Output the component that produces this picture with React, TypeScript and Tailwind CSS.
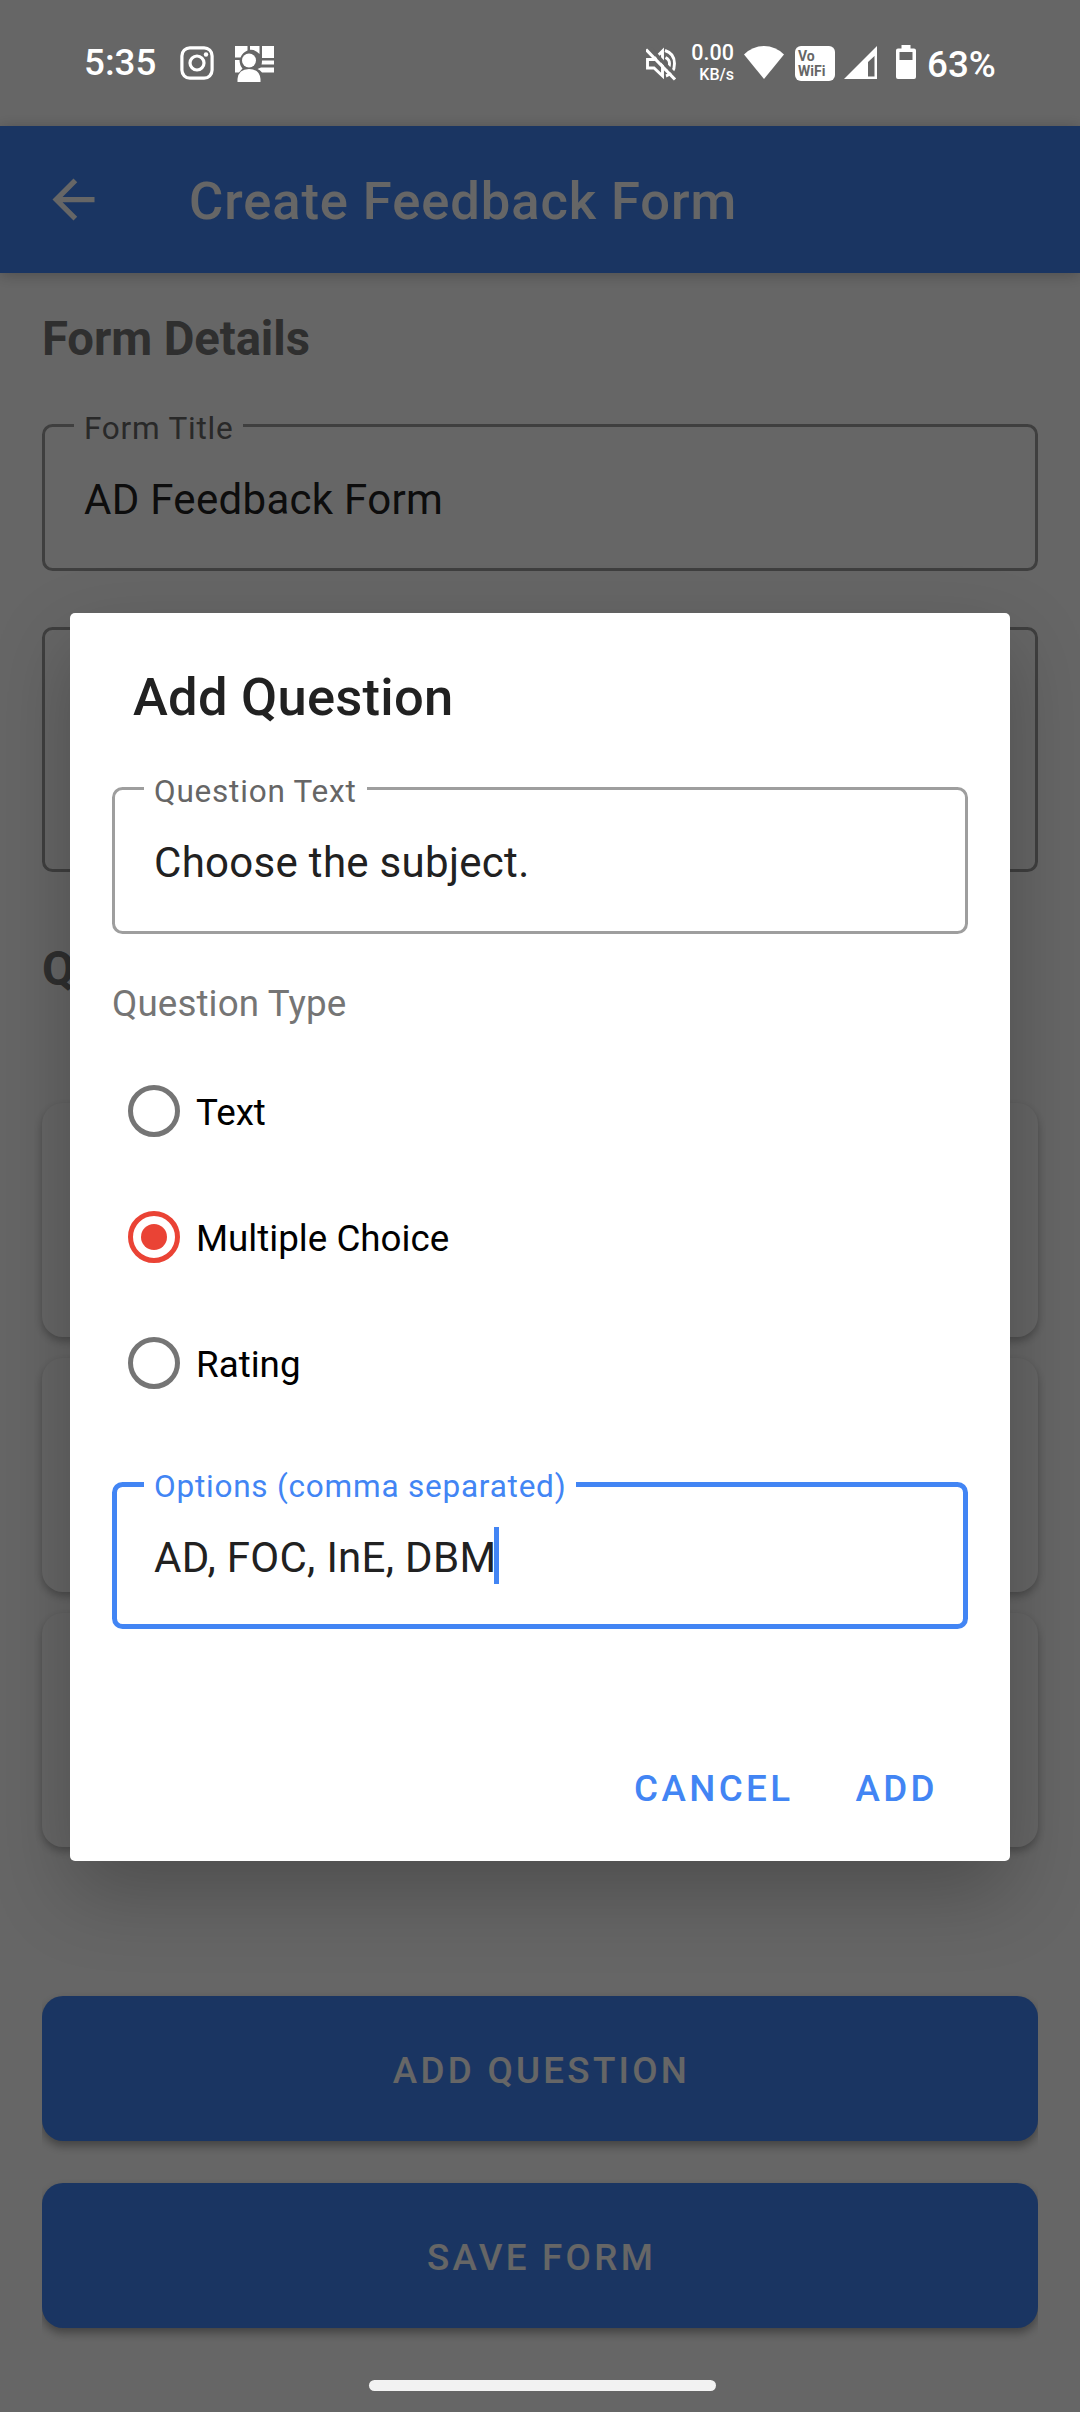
import React from "react";

function StatusBar() {
  return (
    <div className="absolute inset-x-0 top-0 z-20 flex h-[126px] items-start text-white">
      <span className="ml-[84px] mt-[41px] w-[96px] text-[36.75px] leading-[44px] font-medium">5:35</span>
      <svg className="mt-[46px]" width="34" height="34" viewBox="0 0 34 34" fill="none" stroke="white">
        <rect x="1.9" y="1.9" width="30.2" height="30.2" rx="8" strokeWidth="3.2" />
        <circle cx="17" cy="17" r="7" strokeWidth="3.2" />
        <circle cx="26" cy="8.5" r="2.2" fill="white" stroke="none" />
      </svg>
      <svg className="ml-[21px] mt-[45px]" width="39" height="37" viewBox="0 0 39 37" fill="white">
        <path d="M0 1h12.500v4.500Q7.500 7.500 5.500 12.500H0z M15 1h9.500v8Q20 4.300 15 4.800z M27 1h12v12h-12z M0 15h4.500q0 5 3 8.500L4 27.500H0z M27 15.500h12v4H26.500q.5-2 .5-4z M26 22.500h13v5H27Q24.800 24.800 22.500 24z" />
        <circle cx="14" cy="15.500" r="7" />
        <path d="M2.500 37V34Q3.500 24 14 24Q24.500 24 25.500 34V37z" />
      </svg>
      <svg className="ml-[372px] mt-[47px]" width="31" height="34" viewBox="0 0 31 34" fill="none" stroke="white" strokeWidth="2.900">
        <path d="M1.500 12.500h6.500l8.500-8.500v25l-8.500-8H1.500z" />
        <path d="M19 3.500q9.500 3 9.500 13t-8.500 12.500M19.500 10.500q4 2 4 6t-2.500 5" />
        <path d="M3 0l29 31" stroke="#666666" strokeWidth="3.500" />
        <path d="M0 2.500l29 30" strokeWidth="3.200" />
      </svg>
      <div className="ml-[12px] mt-[41px] flex w-[45px] flex-col items-end font-medium">
        <span className="text-[21.500px] leading-[24px]">0.00</span>
        <span className="text-[16px] leading-[19px]">KB/s</span>
      </div>
      <svg className="ml-[10px] mt-[46px]" width="40" height="33" viewBox="0 0 40 33" fill="white">
        <path d="M0 8.500Q8.500 0 20 0T40 8.500L20 33z" />
      </svg>
      <div className="ml-[11px] mt-[45.500px] flex h-[35.500px] w-[40px] flex-col rounded-[6px] bg-white pl-[3px] pt-[3px] text-[14px] font-bold leading-[15px] text-[#666666]">
        <span>Vo</span>
        <span>WiFi</span>
      </div>
      <svg className="ml-[9px] mt-[46px]" width="33" height="33" viewBox="0 0 33 33" fill="white">
        <path fillRule="evenodd" d="M33 0V33H0z M30.500 10L24 16V30.500h6.500z" />
      </svg>
      <svg className="ml-[19px] mt-[45px]" width="20" height="34" viewBox="0 0 20 34" fill="white">
        <path fillRule="evenodd" d="M5.500 0h9v3.500H18q2 0 2 2V32q0 2-2 2H2q-2 0-2-2V5.500q0-2 2-2h3.500z M3.500 7v8h13V7z" />
      </svg>
      <span className="ml-[11px] mt-[43px] text-[36.750px] font-medium leading-[44px]">63%</span>
    </div>
  );
}

type FieldProps = {
  label?: string;
  value?: string;
  focused?: boolean;
  className?: string;
};

function OutlinedField({ label, value, focused = false, className = "" }: FieldProps) {
  return (
    <div
      className={`relative rounded-[10.500px] ${
        focused ? "border-[5px] border-[#4285f4] pl-[37px] pt-[46px]" : "border-[3px] border-[#9e9e9e] pl-[39px] pt-[48px]"
      } ${className}`}
    >
      {label && (
        <span
          className={`absolute whitespace-nowrap bg-white px-[10px] text-[31.500px] leading-[32px] tracking-[0.780px] ${
            focused ? "left-[27px] top-[-16px] text-[#4285f4]" : "left-[29px] top-[-14px] text-[#666666]"
          }`}
        >
          {label}
        </span>
      )}
      {value && (
        <div className="flex items-start">
          <span className="whitespace-nowrap text-[42px] leading-[50px] tracking-[0.300px] text-[#212121]">{value}</span>
          {focused && <span className="-ml-[2px] -mt-[6px] h-[57px] w-[5px] bg-[#4285f4]" />}
        </div>
      )}
    </div>
  );
}

function RadioRow({ label, checked = false }: { label: string; checked?: boolean }) {
  return (
    <div className="flex h-[126px] items-center">
      <span
        className={`flex size-[52px] items-center justify-center rounded-full border-[5px] ${
          checked ? "border-[#ea4335]" : "border-[#757575]"
        }`}
      >
        {checked && <span className="size-[26px] rounded-full bg-[#ea4335]" />}
      </span>
      <span className="ml-[16px] mt-[3px] text-[36.750px] leading-[44px] text-black">{label}</span>
    </div>
  );
}

function PageButton({ children }: { children: React.ReactNode }) {
  return (
    <button className="h-[145px] w-full rounded-[21px] bg-[#4285f4] pl-[3px] pt-[5px] text-[36.750px] font-medium tracking-[3.280px] text-white shadow-[0_5px_10px_rgba(0,0,0,0.350)] [clip-path:inset(-20px_0)]">
      {children}
    </button>
  );
}

function QuestionCard() {
  return <div className="h-[234px] rounded-[21px] bg-white shadow-[0_4px_9px_rgba(0,0,0,0.280)]" />;
}

function Page() {
  return (
    <div className="flex h-full flex-col bg-white">
      <header className="mt-[126px] flex h-[147px] shrink-0 items-center bg-[#4285f4] pl-[42px] shadow-[0_2px_14px_rgba(0,0,0,0.240)]">
        <svg width="63" height="63" viewBox="0 0 24 24" fill="white">
          <path d="M20 11H7.830l5.590-5.590L12 4l-8 8 8 8 1.410-1.410L7.830 13H20v-2z" />
        </svg>
        <h1 className="ml-[84px] mt-[3px] text-[52.500px] font-medium leading-[62px] tracking-[0.920px] text-white">Create Feedback Form</h1>
      </header>
      <main className="flex flex-col px-[42px] pt-[38px]">
        <h2 className="text-[47.250px] font-bold leading-[56px] tracking-[-0.080px] text-[#757575]">Form Details</h2>
        <OutlinedField className="mt-[57px] h-[147px]" label="Form Title" value="AD Feedback Form" />
        <OutlinedField className="mt-[56px] h-[245px]" />
        <h2 className="mt-[69px] text-[47.250px] font-bold leading-[56px] text-[#757575]">Q</h2>
        <div className="mt-[106px] flex flex-col gap-[21px]">
          <QuestionCard />
          <QuestionCard />
          <QuestionCard />
        </div>
        <div className="mt-[149px] flex flex-col gap-[42px]">
          <PageButton>ADD QUESTION</PageButton>
          <PageButton>SAVE FORM</PageButton>
        </div>
      </main>
    </div>
  );
}

function AddQuestionDialog() {
  return (
    <div className="absolute inset-0 z-10 flex flex-col items-center bg-black/60 pt-[613px]">
      <section className="flex h-[1248px] w-[940px] flex-col rounded-[5px] bg-white px-[42px] pt-[53px] shadow-[0_32px_80px_rgba(0,0,0,0.240)]">
        <h2 className="ml-[21px] text-[52.500px] font-medium leading-[62px] tracking-[0.260px] text-[#212121]">Add Question</h2>
        <OutlinedField className="mt-[59px] h-[147px]" label="Question Text" value="Choose the subject." />
        <p className="mt-[48px] text-[36.750px] leading-[44px] tracking-[0.120px] text-[#757575]">Question Type</p>
        <div className="mt-[22px] flex flex-col pl-[16px]">
          <RadioRow label="Text" />
          <RadioRow label="Multiple Choice" checked />
          <RadioRow label="Rating" />
        </div>
        <OutlinedField className="mt-[56px] h-[147px]" label="Options (comma separated)" value="AD, FOC, InE, DBM" focused />
        <div className="mt-[138px] flex justify-end gap-[62px] pr-[30px] text-[36.750px] font-medium leading-[44px] tracking-[3.400px] text-[#4285f4]">
          <button>CANCEL</button>
          <button>ADD</button>
        </div>
      </section>
    </div>
  );
}

export default function App() {
  return (
    <div className="relative h-[2412px] w-[1080px] overflow-hidden font-[Roboto,sans-serif]">
      <Page />
      <AddQuestionDialog />
      <StatusBar />
      <div className="absolute bottom-[21px] left-[369px] z-20 h-[11px] w-[347px] rounded-full bg-[#f2f2f2]" />
    </div>
  );
}
